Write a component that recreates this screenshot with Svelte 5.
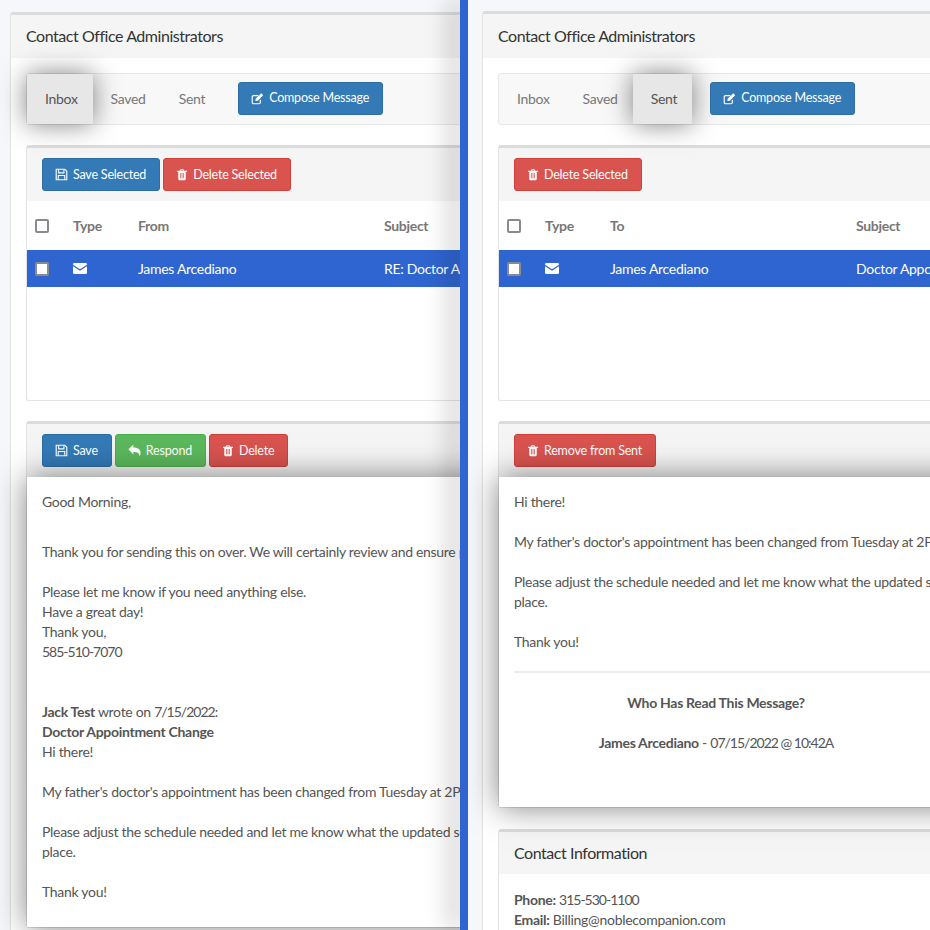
<script lang="ts">
  const panes = [
    { active: "Inbox", tools: [["save", "Save Selected"], ["del", "Delete Selected"]], col: "From", subject: "RE: Doctor Appointment Change" },
    { active: "Sent", tools: [["del", "Delete Selected"]], col: "To", subject: "Doctor Appointment Change" }
  ];
  const styles: Record<string, string> = { save: "blue", del: "red", reply: "green", edit: "blue" };
</script>

{#snippet icon(name: string)}
  <svg class="ico" class:narrow={name === "del"} viewBox="0 0 16 16" aria-hidden="true">
    {#if name === "save"}
      <path fill="none" stroke="currentColor" stroke-width="1.4" d="M1.500 1.500h10.500l2.500 2.500v10.500h-13z" />
      <path fill="none" stroke="currentColor" stroke-width="1.300" d="M4.500 1.700v4.300h6.500v-4.300M4 14.300V9.300h8v5" />
    {:else if name === "del"}
      <path fill="currentColor" d="M6 1h4l1 2h3.500v1.500H13V14a1.500 1.500 0 0 1-1.500 1.500h-7A1.500 1.500 0 0 1 3 14V4.500H1.500V3H5zM6.500 2.200 6.100 3h3.800l-.4-.8zM5.300 6v7h1V6zm2.200 0v7h1V6zm2.200 0v7h1V6z" />
    {:else if name === "reply"}
      <path fill="currentColor" d="M0.500 6.500 6.500 1v3.300c5 0 9 1.700 9 6.700 0 1.500-.6 3-1.500 4 .3-3.500-2-5.200-7.500-5.200V13z" />
    {:else if name === "edit"}
      <path fill="none" stroke="currentColor" stroke-width="1.400" d="M11.500 9.500V13a1.500 1.500 0 0 1-1.500 1.500H3A1.500 1.500 0 0 1 1.500 13V6A1.500 1.500 0 0 1 3 4.500h6" />
      <path fill="currentColor" d="M5.500 8.500 12.500 1.500 15 4 8 11H5.500z" />
    {/if}
  </svg>
{/snippet}

{#snippet btn(kind: string, label: string)}
  <button class="btn {styles[kind]}">{@render icon(kind)}{label}</button>
{/snippet}

{#snippet envelope()}
  <svg class="env" viewBox="0 0 14 11" aria-hidden="true">
    <path fill="currentColor" d="M1.200 0h11.600A1.200 1.200 0 0 1 14 1.200v.6L7 6.300 0 1.800v-.6A1.200 1.200 0 0 1 1.200 0zM0 3.300l7 4.500 7-4.500v6.500A1.200 1.200 0 0 1 12.800 11H1.200A1.200 1.200 0 0 1 0 9.800z" />
  </svg>
{/snippet}

{#snippet list(p: any)}
  <div class="nav">
    {#each ["Inbox", "Saved", "Sent"] as tab}
      <span class="tab" class:active={tab === p.active}>{tab}</span>
    {/each}
    {@render btn("edit", "Compose Message")}
  </div>
  <div class="panel">
    <div class="toolbar">
      {#each p.tools as t}{@render btn(t[0], t[1])}{/each}
    </div>
    <div class="row head">
      <span class="box"></span><span>Type</span><span>{p.col}</span><span>Subject</span>
    </div>
    <div class="row sel">
      <span class="box"></span><span>{@render envelope()}</span><span>James Arcediano</span><span>{p.subject}</span>
    </div>
    <div class="blank"></div>
  </div>
{/snippet}

<div class="page">
  <section class="pane">
    <div class="card">
      <h3>Contact Office Administrators</h3>
      <div class="body">
        {@render list(panes[0])}
        <div class="panel msg">
          <div class="toolbar">
            {@render btn("save", "Save")}
            {@render btn("reply", "Respond")}
            {@render btn("del", "Delete")}
          </div>
          <div class="sheet">
            <p>Good Morning,</p>
            <p class="gap3">Thank you for sending this on over. We will certainly review and ensure proper follow up.</p>
            <p class="gap">Please let me know if you need anything else.<br />Have a great day!<br />Thank you,<br /><span class="num">585-510-7070</span></p>
            <p class="gap2"><b>Jack Test</b> wrote on <span class="num">7/15/2022</span>:<br /><b>Doctor Appointment Change</b><br />Hi there!</p>
            <p class="gap">My father's doctor's appointment has been changed from Tuesday at 2PM to Thursday at 1PM.</p>
            <p class="gap">Please adjust the schedule needed and let me know what the updated schedule is in<br />place.</p>
            <p class="gap">Thank you!</p>
          </div>
        </div>
      </div>
    </div>
  </section>

  <div class="divider"></div>

  <section class="pane right">
    <div class="card">
      <h3>Contact Office Administrators</h3>
      <div class="body">
        {@render list(panes[1])}
        <div class="panel msg">
          <div class="toolbar">
            {@render btn("del", "Remove from Sent")}
          </div>
          <div class="sheet short">
            <p>Hi there!</p>
            <p class="gap">My father's doctor's appointment has been changed from Tuesday at 2PM to Thursday at 1PM.</p>
            <p class="gap">Please adjust the schedule needed and let me know what the updated schedule is in<br />place.</p>
            <p class="gap">Thank you!</p>
            <hr />
            <div class="readers">
              <p><b>Who Has Read This Message?</b></p>
              <p class="gap"><b>James Arcediano</b> - <span class="num">07/15/2022 @ 10:42A</span></p>
            </div>
          </div>
        </div>
        <div class="panel second">
          <h3 class="sub">Contact Information</h3>
          <div class="info">
            <p><b>Phone:</b> <span class="num">315-530-1100</span><br /><b>Email:</b> Billing@noblecompanion.com</p>
          </div>
        </div>
      </div>
    </div>
  </section>
</div>

<style>
  :global(body) {
    margin: 0;
    background: #f5f7fb;
  }

  .page {
    display: flex;
    width: 930px;
    height: 930px;
    overflow: hidden;
    font-family: "Lato", "Liberation Sans", sans-serif;
    font-size: 14px;
    line-height: 20px;
    letter-spacing: -0.3px;
    color: #555;
  }

  .num {
    letter-spacing: -1px;
  }

  .pane {
    width: 460px;
    flex: none;
    overflow: hidden;
    padding: 12px 0 0 10px;
    box-sizing: border-box;
    background: #f5f7fb;
  }

  .pane.right {
    width: 462px;
    padding: 11px 0 0 14px;
    position: relative;
    z-index: 2;
  }

  .divider {
    width: 8px;
    flex: none;
    background: #2f65d0;
    position: relative;
    z-index: 1;
    box-shadow: -8px 0 24px rgba(0, 0, 0, 0.36);
  }

  .card {
    width: 900px;
    background: #fff;
    border: 1px solid #e3e3e3;
    border-top: 3px solid #dcdcdc;
    border-radius: 3px 3px 0 0;
  }

  h3 {
    margin: 0;
    height: 43px;
    box-sizing: border-box;
    padding: 11px 15px;
    background: #f5f5f5;
    font-size: 16px;
    font-weight: 400;
    letter-spacing: -0.45px;
    color: #333;
  }

  .right .card > h3 {
    height: 44px;
    padding-top: 12px;
  }

  h3.sub {
    height: 42px;
  }

  .body {
    padding: 15px 15px 30px;
  }

  .nav {
    display: flex;
    align-items: center;
    height: 50px;
    background: #f8f8f8;
    border: 1px solid #e7e7e7;
    border-radius: 3px;
    margin-bottom: 20px;
  }

  .tab {
    height: 50px;
    display: flex;
    align-items: center;
    padding: 0 15px 0 18px;
    color: #777;
  }

  .tab.active {
    background: #e7e7e7;
    color: #555;
    box-shadow: 0 0 26px rgba(0, 0, 0, 0.5);
  }

  .nav .btn {
    margin-left: 18px;
    margin-top: -2px;
  }

  .btn {
    display: inline-flex;
    align-items: center;
    gap: 5px;
    height: 33px;
    padding: 0 13px 0 12px;
    border: 1px solid transparent;
    border-radius: 3px;
    color: #fff;
    font: inherit;
    font-size: 12.5px;
    letter-spacing: -0.2px;
  }

  .ico {
    width: 13px;
    height: 13px;
  }

  .ico.narrow {
    width: 12px;
  }

  .blue {
    background: #337ab7;
    border-color: #2e6da4;
  }

  .red {
    background: #d9534f;
    border-color: #d43f3a;
  }

  .green {
    background: #5cb85c;
    border-color: #4cae4c;
  }

  .panel {
    background: #fff;
    border: 1px solid #e3e3e3;
    border-top: 3px solid #dcdcdc;
    border-radius: 3px;
    margin-bottom: 20px;
  }

  .toolbar {
    display: flex;
    gap: 3px;
    padding: 10px 15px;
    background: #f5f5f5;
  }

  .row {
    display: grid;
    grid-template-columns: 38px 65px 246px 1fr;
    align-items: center;
    padding-left: 8px;
  }

  .head {
    height: 49px;
    font-weight: 700;
    color: #777;
  }

  .sel {
    height: 37px;
    background: #2f65d0;
    color: #fff;
  }

  .box {
    width: 10px;
    height: 10px;
    border: 2px solid #8a8a90;
    border-radius: 2px;
    background: #fff;
  }

  .env {
    display: block;
    width: 14px;
    height: 11px;
  }

  .blank {
    height: 113px;
  }

  .msg {
    margin-bottom: 0;
  }

  .second {
    margin: 21px 0 0;
    border-radius: 3px 3px 0 0;
  }

  .sheet {
    background: #fff;
    padding: 15px 15px 25px;
    box-shadow: 0 0 30px rgba(0, 0, 0, 0.5);
    position: relative;
    white-space: nowrap;
  }

  .sheet.short {
    height: 330px;
    box-sizing: border-box;
    padding-bottom: 0;
  }

  p {
    margin: 0;
  }

  .gap {
    margin-top: 20px;
  }

  .gap3 {
    margin-top: 30px;
  }

  .gap2 {
    margin-top: 40px;
  }

  hr {
    border: 0;
    border-top: 2px solid #eee;
    margin: 19px 0 20px;
  }

  .readers {
    width: 404px;
    text-align: center;
  }

  .info {
    padding: 16px 15px;
  }
</style>
